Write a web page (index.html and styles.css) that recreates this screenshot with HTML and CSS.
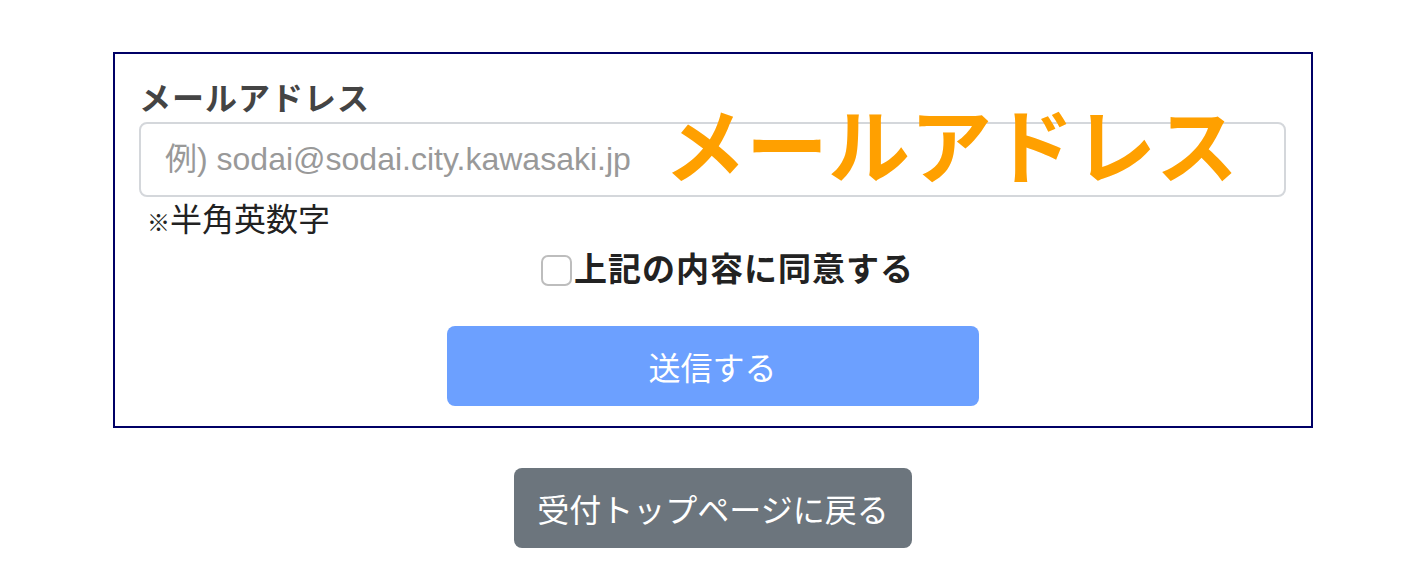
FILE: index.html
```html
<!DOCTYPE html>
<html lang="ja">
<head>
    <meta charset="UTF-8">
    <meta name="viewport" content="width=device-width, initial-scale=1.0">
    <title>メールアドレス登録</title>
    <link rel="stylesheet" href="styles.css">
</head>
<body>
    <div class="page">
        <form class="entry-box" onsubmit="return false;">
            <label class="field-label" for="email">メールアドレス</label>
            <div class="field-wrap">
                <input type="email" id="email" placeholder="例) sodai@sodai.city.kawasaki.jp">
                <span class="field-overlay">メールアドレス</span>
            </div>
            <p class="field-note"><span class="mark">※</span>半角英数字</p>

            <div class="agree-row">
                <input type="checkbox" id="agree">
                <label for="agree">上記の内容に同意する</label>
            </div>

            <div class="submit-row">
                <button type="submit" class="btn btn-submit" id="submitBtn" disabled>送信する</button>
            </div>
        </form>

        <div class="back-row">
            <button type="button" class="btn btn-back">受付トップページに戻る</button>
        </div>
    </div>

    <script>
        // enable the submit button only when the box is ticked
        document.getElementById('agree').addEventListener('change', function() {
            document.getElementById('submitBtn').disabled = !this.checked;
        });
    </script>
</body>
</html>
```

FILE: styles.css
```css
* {
    margin: 0;
    padding: 0;
    box-sizing: border-box;
    font-family: 'Liberation Sans', 'Noto Sans CJK JP', sans-serif;
}

body {
    background: #fff;
    color: #212529;
}

.page {
    width: 1200px;
    margin-left: 113px;
    padding-top: 52px;
}

.entry-box {
    border: 2px solid #000066;
    padding: 21px 25px 20px 24px;
}

.field-label {
    display: block;
    font-size: 32px;
    line-height: 48px;
    font-weight: bold;
    color: #444;
    letter-spacing: 1px;
    margin-bottom: -1px;
}

.field-wrap {
    position: relative;
}

.field-wrap input {
    display: block;
    width: 100%;
    height: 75px;
    padding: 0 24px;
    border: 2px solid #d4d7db;
    border-radius: 8px;
    font-size: 32px;
    color: #333;
    background: #fff;
}

.field-wrap input::placeholder {
    color: #999;
}

.field-wrap input:focus {
    outline: none;
    border-color: #86b7fe;
}

.field-overlay {
    position: absolute;
    left: 525px;
    top: -14px;
    font-size: 82px;
    line-height: 1;
    font-weight: bold;
    color: #ffa000;
    white-space: nowrap;
    pointer-events: none;
}

.field-note {
    height: 48px;
    font-size: 32px;
    line-height: 44px;
    color: #222;
    padding-left: 8px;
    margin-top: 1px;
}

.field-note .mark {
    font-size: 23px;
    line-height: 1;
    font-weight: bold;
}

.agree-row {
    display: flex;
    justify-content: center;
    align-items: center;
    height: 48px;
    padding-left: 30px;
}

.agree-row input[type="checkbox"] {
    appearance: none;
    width: 31px;
    height: 31px;
    border: 2px solid #bdbdbd;
    border-radius: 7px;
    background: #fff;
    margin-right: 2px;
}

.agree-row input[type="checkbox"]:checked {
    background: #0d6efd;
    border-color: #0d6efd;
}

.agree-row label {
    font-size: 33px;
    font-weight: bold;
    color: #222;
    letter-spacing: 1px;
    line-height: 48px;
}

.submit-row,
.back-row {
    display: flex;
    justify-content: center;
}

.submit-row {
    margin-top: 32px;
}

.btn {
    height: 80px;
    border: none;
    border-radius: 8px;
    font-size: 32px;
    color: #fff;
    cursor: pointer;
}

.btn-submit {
    width: 532px;
    background: #6ca0ff;
}

.btn-submit:disabled {
    cursor: default;
}

.btn-back {
    width: 398px;
    background: #6c757d;
}

.back-row {
    margin-top: 40px;
}
```
